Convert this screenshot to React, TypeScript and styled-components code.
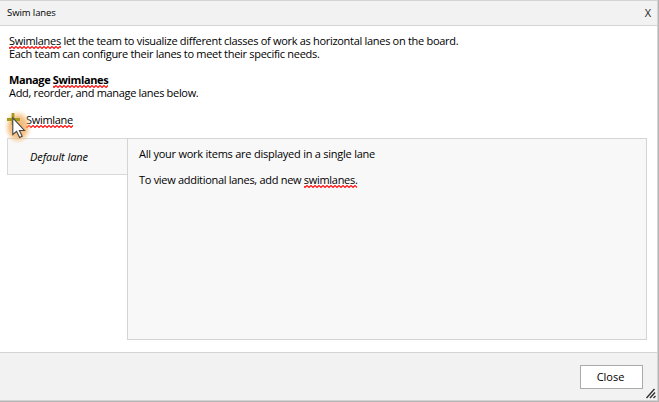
import React from "react";
import styled, { createGlobalStyle } from "styled-components";

const Global = createGlobalStyle`
  * { box-sizing: border-box; }
  body { margin: 0; background: #fff; overflow: hidden; }
`;

const Dialog = styled.div`
  display: flex;
  flex-direction: column;
  width: 659px;
  height: 402px;
  background: #fff;
  border: solid;
  border-width: 0 1px 1px 0;
  border-color: #b4b4b4;
  font: 11px/13px "Open Sans", "Noto Sans", sans-serif;
  color: #000;
`;

const Frame = styled.div`
  display: flex;
  flex-direction: column;
  flex: 1;
  border: 1px solid #d4d4d4;
  border-left: 0;
`;

const TitleBar = styled.header`
  display: flex;
  justify-content: space-between;
  height: 25px;
  padding: 5px 6px 0 7px;
  background: #f2f2f2;
  border-bottom: 1px solid #d4d4d4;
`;

const Line = styled.div<{ $track?: number; $size?: number; $bold?: boolean }>`
  height: 13px;
  white-space: nowrap;
  letter-spacing: ${(p) => p.$track ?? -0.3}px;
  font-size: ${(p) => p.$size ?? 11}px;
  font-weight: ${(p) => (p.$bold ? 700 : 400)};
`;

const CloseX = styled.button`
  height: 13px;
  padding: 0;
  border: 0;
  background: none;
  color: #222;
  font: 11px/13px "Open Sans", sans-serif;
`;

const wave =
  "data:image/svg+xml,%3Csvg xmlns='http://www.w3.org/2000/svg' width='4' height='3'%3E%3Cpath d='M-1 .5L1 2.5L3 .5L5 2.5' fill='none' stroke='%23f11' stroke-width='1.2'/%3E%3C/svg%3E";

const Misspelled = styled.span`
  position: relative;
  display: inline-block;
  height: 13px;

  &::after {
    content: "";
    position: absolute;
    left: 0;
    right: 0;
    top: 12px;
    height: 3px;
    background: url("${wave}") repeat-x;
  }
`;

const Content = styled.main`
  flex: 1;
  padding: 8px 10px 0 7px;
`;

const Paragraph = styled.div`
  margin: 0 0 13px 2px;
`;

const AddRow = styled.div`
  position: relative;
  display: flex;
  height: 25px;
  margin-top: 14px;
  padding-left: 19px;
`;

const Pointer = styled.svg`
  position: absolute;
  left: -7px;
  top: -11px;
`;

const Lanes = styled.div`
  display: flex;
  align-items: flex-start;
  height: 202px;
`;

const LaneTab = styled.div`
  width: 120px;
  height: 37px;
  padding: 11px 0 0 22px;
  background: #f8f8f8;
  border: 1px solid #d8d8d8;
  border-right: 0;
  font-style: italic;
`;

const LanePanel = styled.section`
  display: grid;
  grid-auto-rows: 13px;
  row-gap: 13px;
  flex: 1;
  height: 202px;
  padding: 8px 0 0 11px;
  background: #f8f8f8;
  border: 1px solid #d4d4d4;
`;

const Footer = styled.footer`
  position: relative;
  display: flex;
  justify-content: flex-end;
  height: 48px;
  padding: 12px 14px 0 0;
  background: #f2f2f2;
  border-top: 1px solid #d4d4d4;
`;

const CloseButton = styled.button`
  display: flex;
  justify-content: center;
  width: 63px;
  height: 24px;
  padding: 4px 2px 0 0;
  border: 1px solid #ababab;
  background: #fff;
  color: #000;
  font: 11px/13px "Open Sans", sans-serif;
`;

const Grip = styled.svg`
  position: absolute;
  right: 0;
  bottom: 1px;
`;

export default function App() {
  return (
    <>
      <Global />
      <Dialog>
        <Frame>
          <TitleBar>
            <Line $size={9.5} $track={-0.08}>Swim lanes</Line>
            <CloseX>X</CloseX>
          </TitleBar>
          <Content>
            <Paragraph>
              <Line>
                <Misspelled>Swimlanes</Misspelled> let the team to visualize different classes of work as horizontal lanes on the board.
              </Line>
              <Line>Each team can configure their lanes to meet their specific needs.</Line>
            </Paragraph>
            <Paragraph>
              <Line $bold $track={-0.38}>
                Manage <Misspelled>Swimlanes</Misspelled>
              </Line>
              <Line $track={-0.32}>Add, reorder, and manage lanes below.</Line>
            </Paragraph>
            <AddRow>
              <Line>
                <Misspelled>Swimlane</Misspelled>
              </Line>
              <Pointer width="36" height="43" viewBox="0 0 36 43">
                <defs>
                  <radialGradient id="halo">
                    <stop offset="0" stopColor="#eea047" stopOpacity=".85" />
                    <stop offset=".6" stopColor="#f2ae60" stopOpacity=".7" />
                    <stop offset="1" stopColor="#f8c890" stopOpacity="0" />
                  </radialGradient>
                </defs>
                <ellipse cx="18" cy="25" rx="14" ry="17" fill="url(#halo)" />
                <path d="M7 17.5h13M13 11v12" stroke="#a39a1c" strokeWidth="2.8" />
                <path d="M12.8 16v16.5l3.8-3.2 3 6.2 2.6-1.3-2.8-5.7h5z" fill="#fff" stroke="#444" strokeWidth="1.1" />
              </Pointer>
            </AddRow>
            <Lanes>
              <LaneTab>
                <Line $track={-0.08}>Default lane</Line>
              </LaneTab>
              <LanePanel>
                <Line $track={-0.24}>All your work items are displayed in a single lane</Line>
                <Line>
                  To view additional lanes, add new <Misspelled>swimlanes.</Misspelled>
                </Line>
              </LanePanel>
            </Lanes>
          </Content>
          <Footer>
            <CloseButton>Close</CloseButton>
            <Grip width="12" height="12" viewBox="0 0 12 12">
              <path d="M1.5 11L9.5 2M5 11L10 5.5M8.5 11L10.5 9" stroke="#333" strokeWidth="1.4" />
            </Grip>
          </Footer>
        </Frame>
      </Dialog>
    </>
  );
}
